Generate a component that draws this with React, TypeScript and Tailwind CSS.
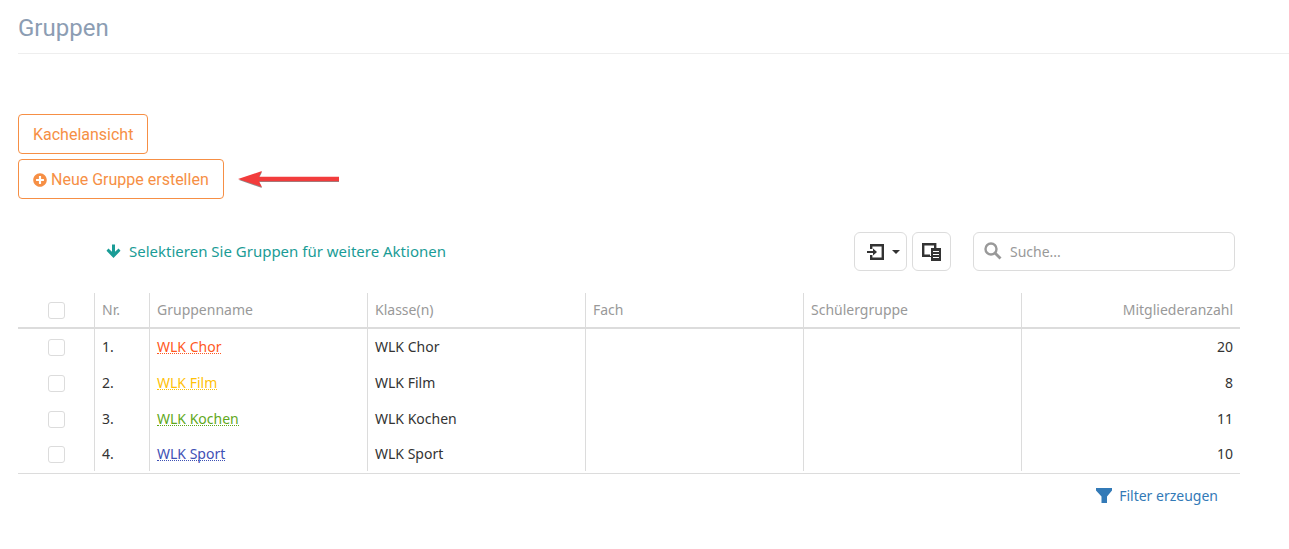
import React, { useState } from 'react';
import { FaPlusCircle } from 'react-icons/fa';

interface Group {
    id: number;
    name: string;
    members: number;
    color: string;
}

const GROUPS: Group[] = [
    { id: 1, name: 'WLK Chor', members: 20, color: 'text-[#ff5722]' },
    { id: 2, name: 'WLK Film', members: 8, color: 'text-[#ffc107]' },
    { id: 3, name: 'WLK Kochen', members: 11, color: 'text-[#5fa81b]' },
    { id: 4, name: 'WLK Sport', members: 10, color: 'text-[#3f51b5]' }
];

const ArrowDownIcon = () => (
    <svg width="15" height="15" viewBox="0 0 15 15" fill="currentColor" aria-hidden="true">
        <path d="M6 .5h3v7.200l3.600-3.200 1.900 2.200-7 7.300-7-7.300 1.900-2.200L6 7.700z" />
    </svg>
);

const ExportIcon = () => (
    <svg width="17" height="16" viewBox="0 0 17 16" fill="none" stroke="currentColor" aria-hidden="true">
        <path d="M4.200 5V1.200h11.600v13.600H4.200V11" strokeWidth="2.400" />
        <path d="M0 8h8" strokeWidth="2" />
        <path d="M6 4.500L10 8l-4 3.500z" fill="currentColor" stroke="none" />
    </svg>
);

const ColumnsIcon = () => (
    <svg width="19" height="18" viewBox="0 0 19 18" aria-hidden="true">
        <path d="M1.200 1.200h12v11.600h-12z" fill="none" stroke="currentColor" strokeWidth="2.400" />
        <path d="M8 5h1v8H8z" fill="#fff" />
        <path d="M9 5h10v13H9z" fill="currentColor" />
        <path d="M11 8.500h6M11 11.500h6M11 14.500h6" stroke="#fff" strokeWidth="1" />
    </svg>
);

const SearchIcon = () => (
    <svg width="18" height="20" viewBox="0 0 18 20" fill="none" stroke="currentColor" aria-hidden="true">
        <circle cx="7" cy="7" r="5.500" strokeWidth="2.400" />
        <path d="M11 11l5.500 5.500" strokeWidth="2.800" />
    </svg>
);

const FilterIcon = () => (
    <svg width="16" height="16" viewBox="0 0 16 16" fill="currentColor" aria-hidden="true">
        <path d="M0 0h16v2.500L11 8.500V15H5.500V8.500L0 2.500z" />
    </svg>
);

// Red marker pointing at the create button
const PointerArrow = () => (
    <svg width="102" height="20" viewBox="0 0 102 20" aria-hidden="true">
        <path d="M1 11l23-8-3 6h80v4H21l3 6z" fill="#8d8d8d" />
        <path d="M0 10l24-8-3 5.700h80v4.600H21l3 5.700z" fill="#f23c3c" />
    </svg>
);

const Checkbox: React.FC<{ label: string; checked: boolean; onChange: () => void }> = ({ label, checked, onChange }) => (
    <input
        type="checkbox"
        aria-label={label}
        checked={checked}
        onChange={onChange}
        className="block mx-auto size-[17px] appearance-none rounded-[3px] border border-[#dcdcdc] bg-white checked:bg-[#1a9c96]"
    />
);

const cell = 'border-l border-[#dcdcdc] px-[7px]';
const outlineButton =
    'flex h-10 items-center gap-1 rounded border border-[#f68f45] px-[14px] pt-px font-[Roboto,sans-serif] text-base text-[#f68f45] hover:bg-orange-50';
const toolButton = 'flex h-[39px] items-center rounded-md border border-[#dcdcdc] text-[#333] hover:bg-gray-50';

export default function App() {
    const [selected, setSelected] = useState<number[]>([]);
    const [search, setSearch] = useState('');

    const visible = GROUPS.filter(g => g.name.toLowerCase().includes(search.toLowerCase()));
    const allSelected = selected.length === GROUPS.length;

    const toggle = (id: number) => {
        setSelected(selected.includes(id) ? selected.filter(s => s !== id) : [...selected, id]);
    };

    return (
        <main className="min-h-screen bg-white pl-[18px] font-['Noto_Sans','Segoe_UI',sans-serif] text-sm text-[#333]">
            <header className="border-b border-[#eee] pt-3 pb-[9px]">
                <h1 className="font-[Roboto,sans-serif] text-2xl text-[#8c9db3]">Gruppen</h1>
            </header>

            <div className="flex flex-col items-start gap-[5px] pt-[60px]">
                <button type="button" className={outlineButton}>Kachelansicht</button>
                <div className="flex items-center gap-[14px]">
                    <button type="button" className={outlineButton}>
                        <FaPlusCircle size={14} />
                        Neue Gruppe erstellen
                    </button>
                    <PointerArrow />
                </div>
            </div>

            <section className="mr-[49px] pt-[33px]">
                {/* Toolbar */}
                <div className="flex items-center pr-[5px] pl-[88px]">
                    <p className="flex items-center gap-2 text-[15px] text-[#1a9c96]">
                        <ArrowDownIcon />
                        Selektieren Sie Gruppen für weitere Aktionen
                    </p>
                    <div className="ml-auto flex gap-[5px]">
                        <button type="button" aria-label="Exportieren" className={`${toolButton} w-[53px] justify-end gap-2 pr-[6px]`}>
                            <ExportIcon />
                            <svg width="8" height="4" viewBox="0 0 8 4" fill="currentColor" aria-hidden="true">
                                <path d="M0 0h8L4 4z" />
                            </svg>
                        </button>
                        <button type="button" aria-label="Spalten" className={`${toolButton} w-[39px] justify-center`}>
                            <ColumnsIcon />
                        </button>
                    </div>
                    <label className="ml-[22px] flex h-[39px] w-[262px] items-center gap-2 rounded-md border border-[#dcdcdc] px-[10px] text-[#999]">
                        <SearchIcon />
                        <input
                            type="text"
                            aria-label="Suche"
                            placeholder="Suche..."
                            value={search}
                            onChange={e => setSearch(e.target.value)}
                            className="min-w-0 flex-1 text-[#333] outline-none placeholder:text-[#999]"
                        />
                    </label>
                </div>

                {/* Table */}
                <table className="mt-[22px] w-full table-fixed border-separate border-spacing-0 text-left">
                    <thead className="text-[#999]">
                        <tr className="h-9 *:border-b-2 *:border-[#dcdcdc] *:font-normal">
                            <th className="w-[76px]">
                                <Checkbox
                                    label="Alle auswählen"
                                    checked={allSelected}
                                    onChange={() => setSelected(allSelected ? [] : GROUPS.map(g => g.id))}
                                />
                            </th>
                            <th className={`${cell} w-[55px]`}>Nr.</th>
                            <th className={cell}>Gruppenname</th>
                            <th className={cell}>Klasse(n)</th>
                            <th className={cell}>Fach</th>
                            <th className={cell}>Schülergruppe</th>
                            <th className={`${cell} w-[219px] text-right`}>Mitgliederanzahl</th>
                        </tr>
                    </thead>
                    <tbody>
                        {visible.map(group => (
                            <tr key={group.id} className="h-9 last:h-[34px]">
                                <td>
                                    <Checkbox
                                        label={group.name}
                                        checked={selected.includes(group.id)}
                                        onChange={() => toggle(group.id)}
                                    />
                                </td>
                                <td className={cell}>{group.id}.</td>
                                <td className={cell}>
                                    <a href="#" className={`inline-block border-b border-dotted border-current leading-3 ${group.color}`}>
                                        {group.name}
                                    </a>
                                </td>
                                <td className={cell}>{group.name}</td>
                                <td className={cell} />
                                <td className={cell} />
                                <td className={`${cell} text-right`}>{group.members}</td>
                            </tr>
                        ))}
                    </tbody>
                </table>

                <div className="mt-[2px] flex justify-end border-t border-[#dcdcdc] pt-3 pr-[22px]">
                    <a href="#" className="flex items-center gap-[7px] text-[#337ab7]">
                        <FilterIcon />
                        Filter erzeugen
                    </a>
                </div>
            </section>
        </main>
    );
}
